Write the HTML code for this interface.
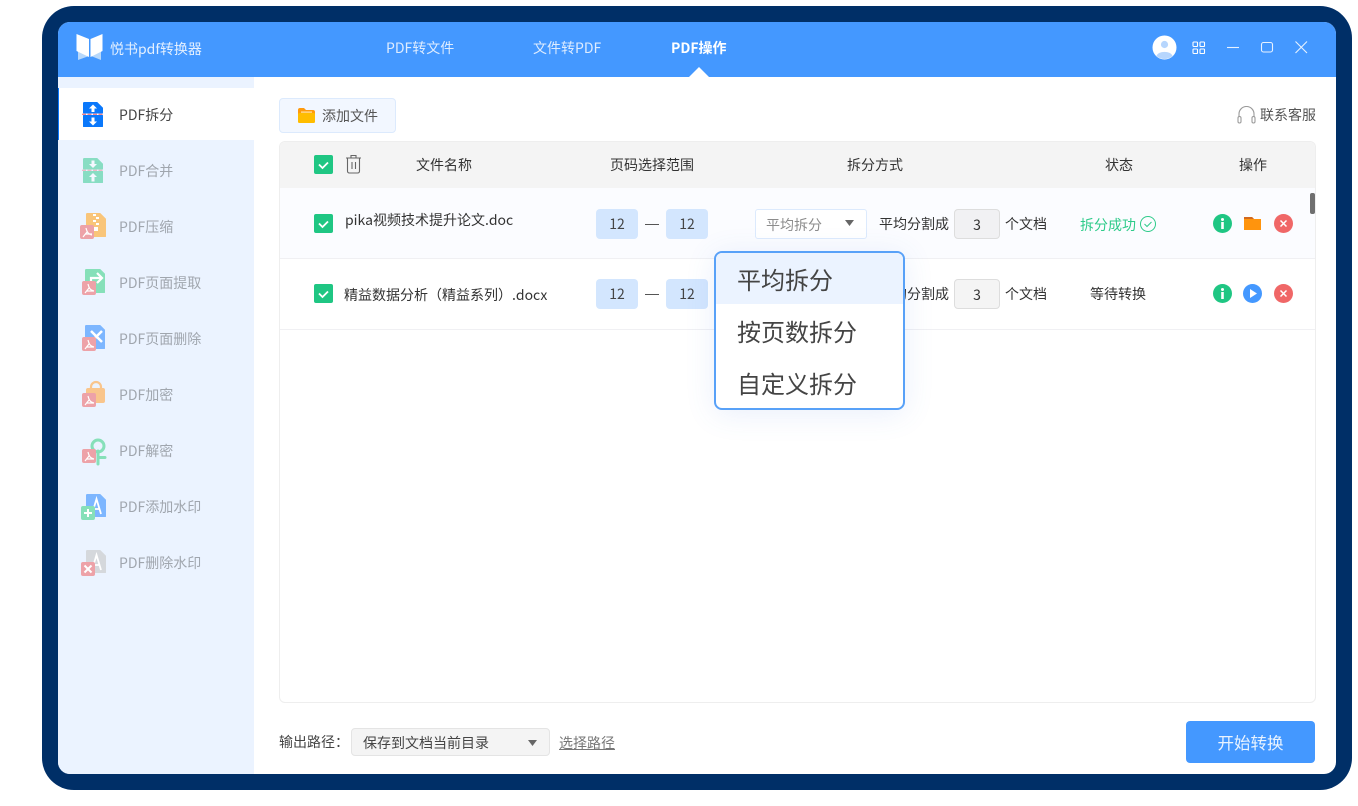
<!DOCTYPE html>
<html lang="zh"><head><meta charset="utf-8"><title>悦书pdf转换器</title>
<style>
html,body{margin:0;padding:0;background:#fff}
body{width:1358px;height:806px;position:relative;overflow:hidden;font-family:"Noto Sans CJK SC","Liberation Sans",sans-serif;font-size:14px;color:#333}
div,span,svg{position:absolute}
.t{white-space:nowrap;line-height:20px}
.c{text-align:center}
.nav{color:#a0a6ae;left:119px}
.hd{color:#333;top:155px}
.cb{width:19px;height:19px;border-radius:2px;background:#1fc683;left:314px}
.num{width:42px;height:30px;border-radius:4px;background:#d3e6fe;color:#444;text-align:center;line-height:31px;font-size:14px}
.n3{left:954px;width:44px;height:28px;border:1px solid #ddd;border-radius:4px;background:#f4f4f4;text-align:center;line-height:30px;color:#333}
.dash{left:645px;width:14px;height:1px;background:#555}
</style></head>
<body>
<div style="left:42px;top:6px;width:1310px;height:784px;background:#002f67;border-radius:32px"></div>
<div style="left:58px;top:22px;width:1278px;height:752px;background:#fff;border-radius:12px;overflow:hidden">
  <div style="left:0;top:0;width:1278px;height:55px;background:#4498ff"></div>
  <div style="left:0;top:55px;width:196px;height:697px;background:#ebf3ff"></div>
  <div style="left:0;top:66px;width:196px;height:52px;background:#fff"></div>
  <div style="left:0;top:66px;width:1px;height:52px;background:#0a78ff"></div>
</div>
<!-- logo -->
<svg style="left:76px;top:33px" width="28" height="28" viewBox="0 0 28 28"><path d="M2 15 L13 20 V23 L2 27Z M25 15 L15 20 V23 L25 27Z" fill="#b7d8fb"/><path d="M0.500 1 L13 6 V24 L0.500 18Z M26.500 1 L14.500 6 V24 L26.500 18Z" fill="#fff"/></svg>
<div class="t" style="left:110px;top:39px;color:#e4f0ff;font-size:14px">悦书pdf转换器</div>
<div class="t" style="left:386px;top:38px;color:#deecff;font-size:14px">PDF转文件</div>
<div class="t" style="left:533px;top:38px;color:#deecff;font-size:14px">文件转PDF</div>
<div class="t" style="left:671px;top:38px;color:#fff;font-weight:bold;font-size:14px">PDF操作</div>
<svg style="left:689px;top:66px" width="20" height="11"><path d="M0 11 L10 1 L20 11Z" fill="#fff"/></svg>
<!-- window icons -->
<svg style="left:1152px;top:35px" width="25" height="25" viewBox="0 0 25 25"><circle cx="12.500" cy="12.500" r="12" fill="#fff"/><circle cx="12.500" cy="9.500" r="3.600" fill="#b7d6fd"/><path d="M4.500 21 C6 15.500 19 15.500 20.500 21 A12 12 0 0 1 4.500 21Z" fill="#b7d6fd"/></svg>
<svg style="left:1192px;top:41px" width="14" height="14" fill="none" stroke="#fff" stroke-width="1.100"><rect x="1" y="1" width="4.500" height="4.500" rx=".8"/><rect x="8" y="1" width="4.500" height="4.500" rx=".8"/><rect x="1" y="8" width="4.500" height="4.500" rx=".8"/><rect x="8" y="8" width="4.500" height="4.500" rx=".8"/></svg>
<svg style="left:1226px;top:40px" width="90" height="16" fill="none" stroke="#e8f2ff" stroke-width="1.100"><path d="M1 7.500H13"/><rect x="35.500" y="2.500" width="11" height="9.500" rx="2"/><path d="M69.500 1.500 L81 13 M81 1.500 L69.500 13"/></svg>
<!-- sidebar -->
<svg style="left:82px;top:102px" width="22" height="26" viewBox="0 0 22 26"><path d="M2 .5H15L20.500 6V11H1.500V1Z M1.500 13.500H20.500V24.500H1.500Z" fill="#0a78fb" stroke="#0a78fb" stroke-linejoin="round"/><path d="M0 12.300H23" stroke="#f35b66" stroke-dasharray="4 1.500" stroke-width="1"/><path d="M11 2.500 L15 6.500H12.500V10H9.500V6.500H7Z M11 23.500 L15 19.500H12.500V15.500H9.500V19.500H7Z" fill="#fff"/></svg>
<div class="t" style="left:119px;top:105px;color:#444">PDF拆分</div>
<svg style="left:82px;top:158px;opacity:.48" width="22" height="26" viewBox="0 0 22 26"><path d="M2 .5H15L20.500 6V11H1.500V1Z M1.500 13.500H20.500V24.500H1.500Z" fill="#1fc683" stroke="#1fc683" stroke-linejoin="round"/><path d="M0 12.300H23" stroke="#f35b66" stroke-dasharray="4 1.500" stroke-width="1"/><path d="M11 10 L15 6H12.500V2.500H9.500V6H7Z M11 15 L15 19H12.500V23.500H9.500V19H7Z" fill="#fff"/></svg>
<div class="t nav" style="top:161px">PDF合并</div>
<!-- compress -->
<svg style="left:80px;top:212px" width="28" height="28" viewBox="0 0 28 28"><path d="M7 1.500H20L25.500 7V24.500H6.500V2Z" fill="#f9c57a" stroke="#f9c57a" stroke-linejoin="round"/><path d="M13 2h3v2h-3zM16 5h3v2h-3zM13 8h3v2h-3zM16 11h3v2h-3zM14 15h4v4h-4z" fill="#fff"/><rect x="0" y="13" width="14" height="14" rx="2" fill="#eda2a8"/><path d="M6 16 C7 20 8 22 12 23 M7 20 L3 25 M5 22 H12" stroke="#fff" stroke-width="1.200" fill="none"/></svg>
<div class="t nav" style="top:217px">PDF压缩</div>
<!-- extract -->
<svg style="left:81px;top:268px" width="28" height="28" viewBox="0 0 28 28"><path d="M5 1.500H19L23.500 6V24.500H4.500V2Z" fill="#86e0b9" stroke="#86e0b9" stroke-linejoin="round"/><path d="M10 16V10H20M16 5L21 10L16 15" stroke="#fff" stroke-width="2.200" fill="none"/><rect x="1" y="13" width="14" height="14" rx="2" fill="#eda2a8"/><path d="M7 16 C8 20 9 22 13 23 M8 20 L4 25 M6 23 H13" stroke="#fff" stroke-width="1.200" fill="none"/></svg>
<div class="t nav" style="top:273px">PDF页面提取</div>
<!-- delete -->
<svg style="left:81px;top:324px" width="28" height="28" viewBox="0 0 28 28"><path d="M5 1.500H19L23.500 6V24.500H4.500V2Z" fill="#7db6ff" stroke="#7db6ff" stroke-linejoin="round"/><path d="M10 7L21 18M21 7L10 18" stroke="#fff" stroke-width="2.500"/><rect x="1" y="13" width="14" height="14" rx="2" fill="#eda2a8"/><path d="M7 16 C8 20 9 22 13 23 M8 20 L4 25 M6 23 H13" stroke="#fff" stroke-width="1.200" fill="none"/></svg>
<div class="t nav" style="top:329px">PDF页面删除</div>
<!-- lock -->
<svg style="left:81px;top:380px" width="28" height="30" viewBox="0 0 28 30"><path d="M10 9V7a5 5 0 0 1 10 0V9" stroke="#f9c58c" stroke-width="2.200" fill="none"/><rect x="5" y="8" width="19" height="15" rx="2" fill="#f9c58c"/><rect x="1" y="13" width="14" height="14" rx="2" fill="#eda2a8"/><path d="M7 16 C8 20 9 22 13 23 M8 20 L4 25 M6 23 H13" stroke="#fff" stroke-width="1.200" fill="none"/></svg>
<div class="t nav" style="top:385px">PDF加密</div>
<!-- unlock -->
<svg style="left:81px;top:437px" width="28" height="30" viewBox="0 0 28 30"><circle cx="17" cy="9" r="6" stroke="#86e0b9" stroke-width="3" fill="none"/><path d="M17 14V27M17 20.500H24" stroke="#86e0b9" stroke-width="3" fill="none" stroke-linecap="round"/><rect x="1" y="12" width="14" height="14" rx="2" fill="#eda2a8"/><path d="M7 15 C8 19 9 21 13 22 M8 19 L4 24 M6 22 H13" stroke="#fff" stroke-width="1.200" fill="none"/></svg>
<div class="t nav" style="top:441px">PDF解密</div>
<!-- add watermark -->
<svg style="left:80px;top:493px" width="28" height="28" viewBox="0 0 28 28"><path d="M7 1.500H20L25.500 7V23.500H6.500V2Z" fill="#7db6ff" stroke="#7db6ff" stroke-linejoin="round"/><path d="M12 21L16.500 6L21 21M14 16H19.500" stroke="#fff" stroke-width="1.800" fill="none"/><rect x="1" y="13" width="14" height="14" rx="2" fill="#86e0b9"/><path d="M4 20H12M8 16V24" stroke="#fff" stroke-width="2"/></svg>
<div class="t nav" style="top:497px">PDF添加水印</div>
<!-- remove watermark -->
<svg style="left:80px;top:549px" width="28" height="28" viewBox="0 0 28 28"><path d="M7 1.500H20L25.500 7V23.500H6.500V2Z" fill="#d5d8dc" stroke="#d5d8dc" stroke-linejoin="round"/><path d="M12 21L16.500 6L21 21M14 16H19.500" stroke="#fff" stroke-width="1.800" fill="none"/><rect x="1" y="13" width="14" height="14" rx="2" fill="#eda2a8"/><path d="M4.500 16.500L11.500 23.500M11.500 16.500L4.500 23.500" stroke="#fff" stroke-width="2"/></svg>
<div class="t nav" style="top:553px">PDF删除水印</div>

<!-- toolbar -->
<div style="left:279px;top:98px;width:115px;height:33px;background:#f2f7ff;border:1px solid #dceafd;border-radius:4px"></div>
<svg style="left:298px;top:108px" width="17" height="15" viewBox="0 0 17 15"><path d="M0 2Q0 0 2 0H6L8 2H15Q17 2 17 4V13Q17 15 15 15H2Q0 15 0 13Z" fill="#ff9a0d"/><rect x="0" y="5" width="17" height="10" rx="1.500" fill="#ffbd00"/><rect x="3" y="3.500" width="11" height="1.200" fill="#ffe7a8"/></svg>
<div class="t" style="left:322px;top:106px;color:#555">添加文件</div>
<svg style="left:1237px;top:106px" width="19" height="18" viewBox="0 0 19 18" fill="none" stroke="#9a9a9a" stroke-width="1.100"><path d="M2 11V8a7.500 7.500 0 0 1 15 0V11"/><rect x="1" y="10.500" width="3" height="6.500" rx="1.500"/><rect x="15" y="10.500" width="3" height="6.500" rx="1.500"/></svg>
<div class="t" style="left:1260px;top:105px;color:#555">联系客服</div>

<!-- table -->
<div style="left:279px;top:141px;width:1035px;height:560px;border:1px solid #eeeeee;border-radius:6px;overflow:hidden">
  <div style="left:0;top:0;width:1035px;height:46px;background:#f4f4f4"></div>
  <div style="left:0;top:46px;width:1035px;height:70px;background:#fbfcff"></div>
  <div style="left:0;top:116px;width:1035px;height:1px;background:#f0f0f3"></div>
  <div style="left:0;top:187px;width:1035px;height:1px;background:#f0f0f3"></div>
</div>
<div style="left:1310px;top:193px;width:5px;height:21px;background:#6f6f6f;border-radius:2px"></div>

<div class="cb" style="top:155px"></div>
<div class="cb" style="top:214px"></div>
<div class="cb" style="top:284px"></div>
<svg style="left:314px;top:155px" width="19" height="19" fill="none" stroke="#fff" stroke-width="1.800"><path d="M5 9.500L8.500 13L14 7.500"/></svg>
<svg style="left:314px;top:214px" width="19" height="19" fill="none" stroke="#fff" stroke-width="1.800"><path d="M5 9.500L8.500 13L14 7.500"/></svg>
<svg style="left:314px;top:284px" width="19" height="19" fill="none" stroke="#fff" stroke-width="1.800"><path d="M5 9.500L8.500 13L14 7.500"/></svg>
<svg style="left:345px;top:154px" width="18" height="20" viewBox="0 0 18 20" fill="none" stroke="#666" stroke-width="1.100"><path d="M1 4H16M6 4V1.500H11V4M2.500 4V17Q2.500 19 4.500 19H12.500Q14.500 19 14.500 17V4M7 8V15M10.500 8V15"/></svg>

<div class="t hd" style="left:416px">文件名称</div>
<div class="t hd" style="left:610px">页码选择范围</div>
<div class="t hd" style="left:847px">拆分方式</div>
<div class="t hd" style="left:1105px">状态</div>
<div class="t hd" style="left:1239px">操作</div>

<!-- row 1 -->
<div class="t" style="left:345px;top:210px;color:#333">pika视频技术提升论文.doc</div>
<div class="num" style="left:596px;top:209px">12</div><div class="dash" style="top:224px"></div><div class="num" style="left:666px;top:209px">12</div>
<div style="left:755px;top:209px;width:110px;height:28px;background:#fff;border:1px solid #dceafd;border-radius:3px"></div>
<div class="t" style="left:766px;top:215px;color:#8c8c8c;font-size:14px">平均拆分</div>
<svg style="left:844px;top:219px" width="11" height="8"><path d="M1 1H10L5.500 7Z" fill="#666"/></svg>
<div class="t" style="left:879px;top:214px">平均分割成</div>
<div class="n3" style="top:209px;background:#f1f1f3">3</div>
<div class="t" style="left:1005px;top:214px">个文档</div>
<div class="t" style="left:1080px;top:215px;color:#2ecb8a">拆分成功</div>
<svg style="left:1139px;top:215px" width="18" height="18" fill="none" stroke="#2ecb8a" stroke-width="1"><circle cx="9" cy="9" r="7.500"/><path d="M5.500 9L8 11.500L12.500 7"/></svg>
<svg style="left:1213px;top:214px" width="19" height="19"><circle cx="9.500" cy="9.500" r="9.500" fill="#1fc683"/><rect x="8.200" y="8" width="2.600" height="7" fill="#fff"/><circle cx="9.500" cy="5.500" r="1.500" fill="#fff"/></svg>
<svg style="left:1244px;top:216px" width="18" height="15"><path d="M0 1H8L10 3H17V14H0Z" fill="#ff940d"/><path d="M0 1H8L10 3H0Z" fill="#d2691e"/></svg>
<svg style="left:1274px;top:214px" width="19" height="19" stroke="#fff" stroke-width="1.500"><circle cx="9.500" cy="9.500" r="9.500" fill="#f06767" stroke="none"/><path d="M6.500 6.500L12.500 12.500M12.500 6.500L6.500 12.500"/></svg>

<!-- row 2 -->
<div class="t" style="left:344px;top:285px;color:#333">精益数据分析（精益系列）.docx</div>
<div class="num" style="left:596px;top:279px">12</div><div class="dash" style="top:294px"></div><div class="num" style="left:666px;top:279px">12</div>
<div class="t" style="left:879px;top:284px">平均分割成</div>
<div class="n3" style="top:279px">3</div>
<div class="t" style="left:1005px;top:284px">个文档</div>
<div class="t" style="left:1090px;top:284px">等待转换</div>
<svg style="left:1213px;top:284px" width="19" height="19"><circle cx="9.500" cy="9.500" r="9.500" fill="#1fc683"/><rect x="8.200" y="8" width="2.600" height="7" fill="#fff"/><circle cx="9.500" cy="5.500" r="1.500" fill="#fff"/></svg>
<svg style="left:1243px;top:284px" width="19" height="19"><circle cx="9.500" cy="9.500" r="9.500" fill="#4498ff"/><path d="M7 5L14 9.500L7 14Z" fill="#fff"/></svg>
<svg style="left:1274px;top:284px" width="19" height="19" stroke="#fff" stroke-width="1.500"><circle cx="9.500" cy="9.500" r="9.500" fill="#f06767" stroke="none"/><path d="M6.500 6.500L12.500 12.500M12.500 6.500L6.500 12.500"/></svg>

<!-- dropdown -->
<div style="left:714px;top:251px;width:187px;height:155px;background:#fff;border:2px solid #58a1f8;border-radius:8px;box-shadow:0 4px 30px rgba(70,120,220,.12);overflow:hidden">
  <div style="left:0;top:0;width:187px;height:51px;background:#ebf3ff"></div>
  <div class="t" style="left:21px;top:13px;font-size:24px;line-height:26px;color:#444">平均拆分</div>
  <div class="t" style="left:21px;top:65px;font-size:24px;line-height:26px;color:#444">按页数拆分</div>
  <div class="t" style="left:21px;top:117px;font-size:24px;line-height:26px;color:#444">自定义拆分</div>
</div>

<!-- footer -->
<div class="t" style="left:279px;top:732px;color:#444">输出路径：</div>
<div style="left:351px;top:728px;width:197px;height:26px;background:#f4f4f4;border:1px solid #e4e4e4;border-radius:4px"></div>
<div class="t" style="left:363px;top:733px;color:#444">保存到文档当前目录</div>
<svg style="left:527px;top:739px" width="11" height="8"><path d="M1 1H10L5.500 7Z" fill="#666"/></svg>
<div class="t" style="left:559px;top:733px;color:#777;text-decoration:underline">选择路径</div>
<div class="t c" style="left:1186px;top:721px;width:129px;height:42px;background:#4498ff;border-radius:4px;color:#e9f3ff;font-size:16.500px;line-height:43px">开始转换</div>
</body></html>
